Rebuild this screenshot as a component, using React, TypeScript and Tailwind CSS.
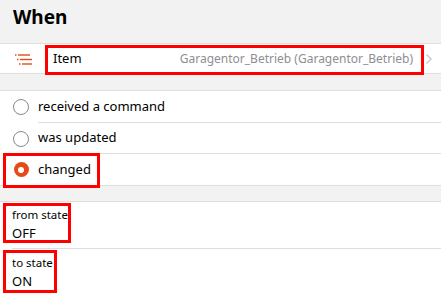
import React from "react";

const font = { fontFamily: '"Noto Sans", "Open Sans", sans-serif' };

function Radio({ checked }: { checked?: boolean }) {
  return checked ? (
    <span className="w-[15px] h-[15px] rounded-full bg-[#e64a19] flex items-center justify-center">
      <span className="w-[6px] h-[6px] rounded-full bg-white" />
    </span>
  ) : (
    <span className="w-[16px] h-[16px] rounded-full border border-[#8a8a8a] bg-white" />
  );
}

const rows = [
  { t: "received a command", h: "h-[32px]" },
  { t: "was updated", h: "h-[31px]" },
  { t: "changed", h: "h-[31px]" },
];

export default function App() {
  return (
    <div className="w-[441px] h-[295px] bg-[#f2f2f2] overflow-hidden text-black" style={font}>
      <div className="h-[43px] px-[13px] pt-[3px] text-[19px] font-bold leading-[28px]">When</div>

      <div className="h-[31px] bg-white border-y border-[#dedede] flex items-center relative">
        <svg className="ml-[14px] w-[20px] h-[14px]" viewBox="0 0 20 14">
          <g stroke="#e64a19" strokeWidth="1.4">
            <line x1="1" y1="3" x2="2.5" y2="3" />
            <line x1="4" y1="3" x2="16" y2="3" />
            <line x1="3" y1="7.5" x2="4.5" y2="7.5" />
            <line x1="6" y1="7.5" x2="18" y2="7.5" />
            <line x1="5" y1="12" x2="6.5" y2="12" />
            <line x1="8" y1="12" x2="18" y2="12" />
          </g>
        </svg>
        <span className="ml-[19px] text-[13px]">Item</span>
        <span className="ml-auto mr-[12px] text-[12px] text-[#8e8e93]">Garagentor_Betrieb (Garagentor_Betrieb)</span>
        <svg className="w-[8px] h-[12px] mr-[8px]" viewBox="0 0 8 12">
          <path d="M1.5 1.5 L6 6 L1.5 10.5" stroke="#c7c7cc" strokeWidth="1.4" fill="none" />
        </svg>
        <div className="absolute left-[45px] top-[1px] w-[379px] h-[30px] border-[3px] border-[#ff0000]" />
      </div>

      <div className="h-[16px]" />

      <div className="bg-white border-y border-[#dedede]">
        {rows.map((r, i) => (
          <div key={r.t} className={`${r.h} flex items-center relative`}>
            <span className="w-[38px] flex justify-center pl-[4px] shrink-0">
              <Radio checked={i === 2} />
            </span>
            <span className={`flex-1 h-full flex items-center text-[13px] ${i < 2 ? "border-b border-[#dedede]" : ""}`}>{r.t}</span>
            {i === 2 && <div className="absolute left-[3px] top-[-1px] w-[97px] h-[35px] border-[3px] border-[#ff0000]" />}
          </div>
        ))}
      </div>

      <div className="h-[15px]" />

      <div className="bg-white border-t border-[#dedede]">
        <div className="h-[47px] relative pl-[12px]">
          <div className="h-full border-b border-[#dedede] flex flex-col justify-center">
            <span className="text-[11.5px] leading-[16px]">from state</span>
            <span className="text-[13px] leading-[20px]">OFF</span>
          </div>
          <div className="absolute left-[3px] top-[1px] w-[68px] h-[40px] border-[3px] border-[#ff0000]" />
        </div>
        <div className="h-[47px] relative pl-[12px]">
          <div className="h-full flex flex-col justify-center">
            <span className="text-[11.5px] leading-[16px]">to state</span>
            <span className="text-[13px] leading-[20px]">ON</span>
          </div>
          <div className="absolute left-[3px] top-[1px] w-[54px] h-[43px] border-[3px] border-[#ff0000]" />
        </div>
      </div>
    </div>
  );
}
